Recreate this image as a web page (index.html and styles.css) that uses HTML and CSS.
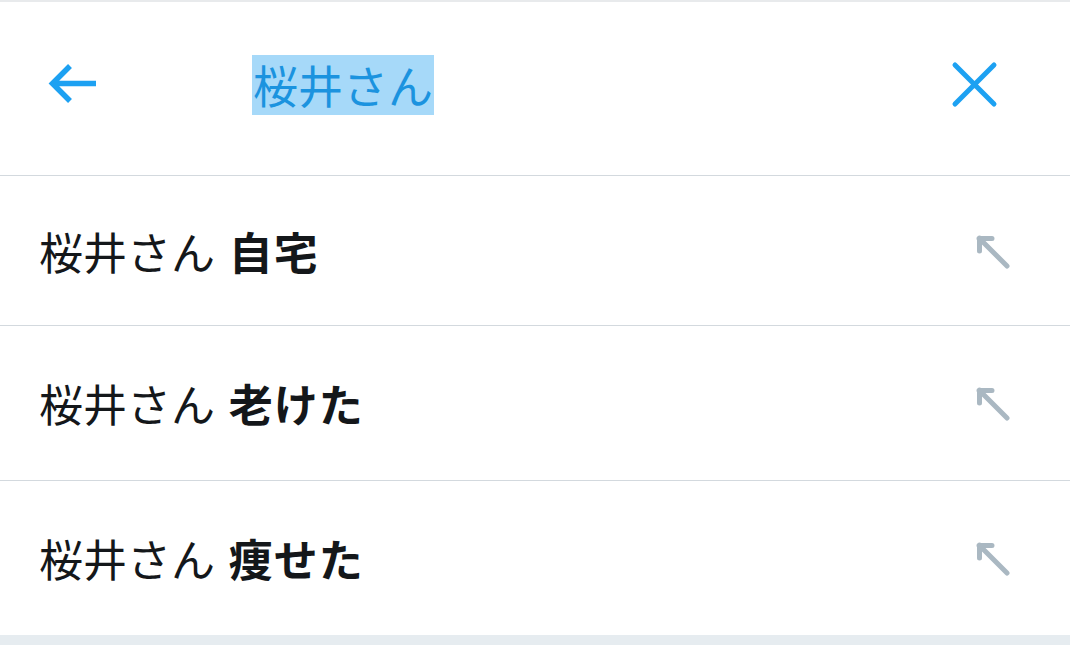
FILE: index.html
```html
<!DOCTYPE html>
<html lang="ja">
<head>
    <meta charset="UTF-8">
    <meta name="viewport" content="width=device-width, initial-scale=1.0">
    <title>検索</title>
    <link rel="stylesheet" href="styles.css">
</head>
<body>
    <div class="screen">
        <header class="search-bar">
            <button class="icon-btn back" aria-label="戻る">
                <svg width="52" height="50" viewBox="0 0 52 50">
                    <path d="M49 23.5H6M23 6L5.5 23.5 23 41" fill="none" stroke="#1da1f2" stroke-width="5.5" stroke-linejoin="miter"/>
                </svg>
            </button>
            <div class="query"><span class="selected">桜井さん</span></div>
            <button class="icon-btn clear" aria-label="クリア">
                <svg width="48" height="48" viewBox="0 0 48 48">
                    <path d="M4 4L43 43M43 4L4 43" fill="none" stroke="#1da1f2" stroke-width="5" stroke-linecap="round"/>
                </svg>
            </button>
        </header>

        <ul class="suggestions">
            <li class="row">
                <span class="term">桜井さん <b>自宅</b></span>
                <svg class="fill-icon" width="34" height="34" viewBox="0 0 34 34">
                    <path d="M3 3.5H16M3.5 3V16M3.5 3.5L31 31" fill="none" stroke="#aab8c2" stroke-width="5" stroke-linecap="round"/>
                </svg>
            </li>
            <li class="row">
                <span class="term">桜井さん <b>老けた</b></span>
                <svg class="fill-icon" width="34" height="34" viewBox="0 0 34 34">
                    <path d="M3 3.5H16M3.5 3V16M3.5 3.5L31 31" fill="none" stroke="#aab8c2" stroke-width="5" stroke-linecap="round"/>
                </svg>
            </li>
            <li class="row">
                <span class="term">桜井さん <b>痩せた</b></span>
                <svg class="fill-icon" width="34" height="34" viewBox="0 0 34 34">
                    <path d="M3 3.5H16M3.5 3V16M3.5 3.5L31 31" fill="none" stroke="#aab8c2" stroke-width="5" stroke-linecap="round"/>
                </svg>
            </li>
        </ul>
    </div>
</body>
</html>
```

FILE: styles.css
```css
html, body {
    margin: 0;
    padding: 0;
    height: 100%;
}
body {
    font-family: "Noto Sans CJK JP", "Noto Sans", sans-serif;
    background: #e6ecf0;
    color: #14171a;
}
.screen {
    background: #fff;
    border-top: 2px solid #e8eaec;
}
.search-bar {
    display: flex;
    align-items: center;
    height: 166px;
    padding-bottom: 7px;
    border-bottom: 1px solid #d3d9de;
}
.icon-btn {
    background: none;
    border: 0;
    padding: 0;
    display: flex;
}
.back {
    margin-left: 47px;
}
.query {
    flex: 1;
    padding-left: 153px;
    font-size: 45px;
    line-height: 60px;
    color: #1b93df;
}
.selected {
    display: inline-block;
    background: #a6d9f9;
    height: 60px;
    padding: 0 1px;
}
.clear {
    margin-right: 71px;
}
.suggestions {
    list-style: none;
    margin: 0;
    padding: 0;
}
.row {
    display: flex;
    align-items: center;
    justify-content: space-between;
    height: 154px;
    padding: 0 60px 0 39px;
    border-bottom: 1px solid #d3d9de;
}
.row:first-child {
    height: 149px;
}
.row:last-child {
    border-bottom: 0;
}
.term {
    font-size: 44px;
    line-height: 1;
    word-spacing: 4px;
}
.term b {
    font-weight: 700;
    letter-spacing: 1px;
}
.fill-icon {
    margin-top: 2px;
}
```
